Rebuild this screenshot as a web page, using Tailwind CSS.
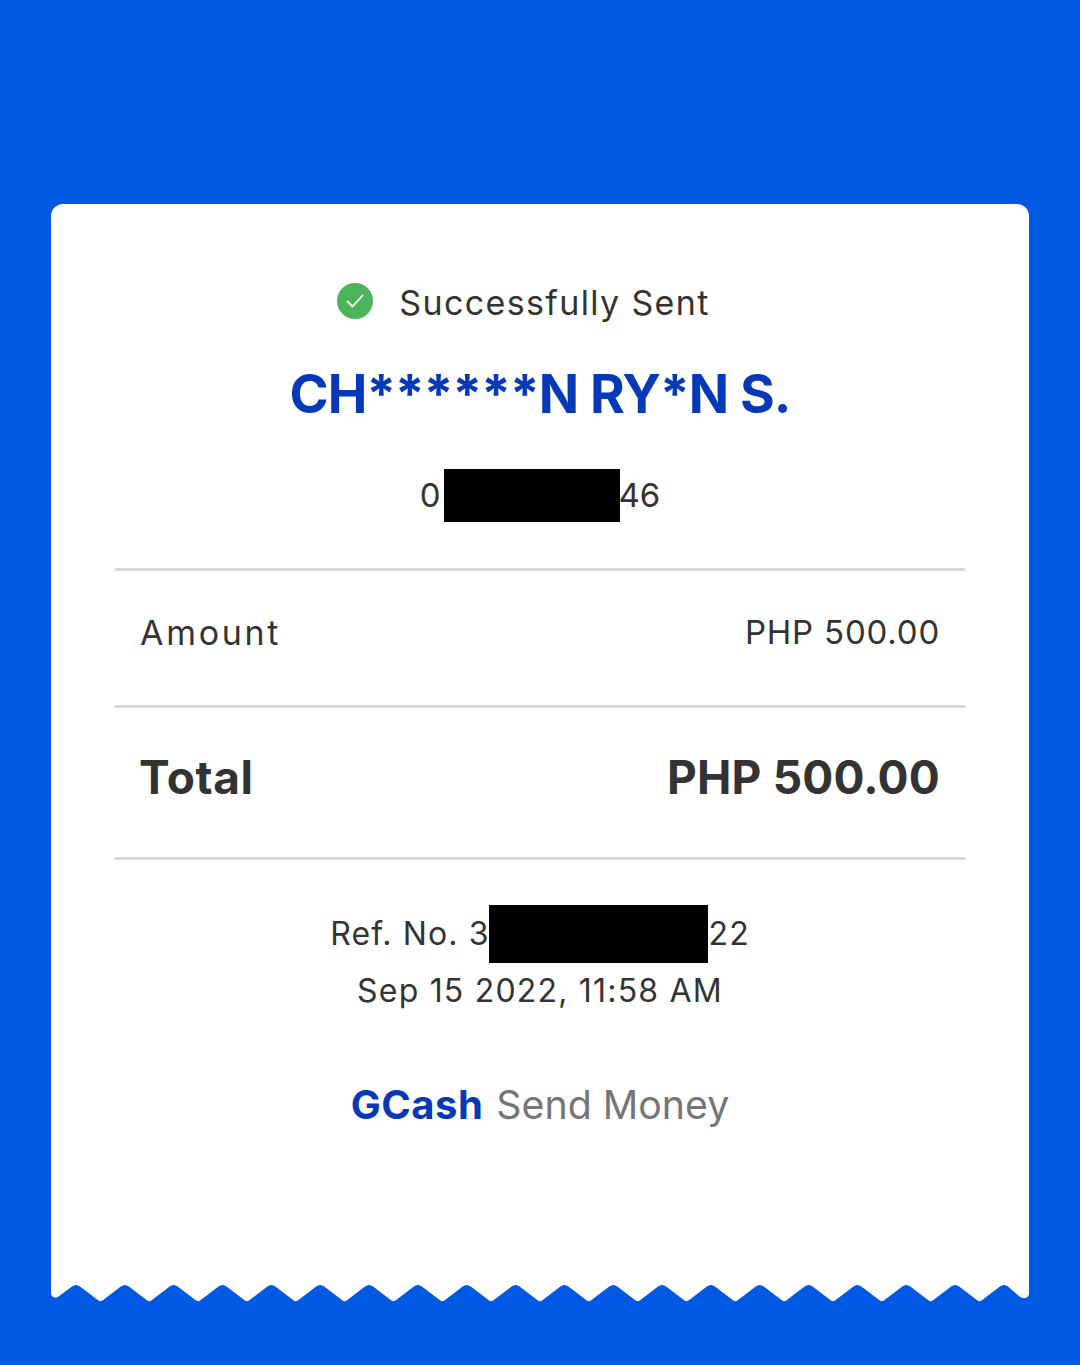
<!DOCTYPE html>
<html>
<head>
<meta charset="utf-8">
<script src="https://cdn.jsdelivr.net/npm/@tailwindcss/browser@4"></script>
</head>
<body class="m-0">
<div class="w-[1080px] h-[1365px] bg-[#0058e3] pt-[204px] px-[51px] overflow-hidden font-['Inter',sans-serif] text-[#333333]">
  <div class="w-[978px] h-[1081px] bg-white rounded-t-[12px] flex flex-col items-center pt-[78px]">
    <div class="h-[42px] flex items-center gap-[26px] pr-[33px]">
      <svg class="w-[36px] h-[36px] mb-[4px]" viewBox="0 0 36 36"><circle cx="18" cy="18" r="18" fill="#4cb45c"/><path d="M10.5 18.5l5 5 10-11" fill="none" stroke="#fff" stroke-width="1.8" stroke-linecap="round" stroke-linejoin="round"/></svg>
      <span class="text-[34px] leading-[42px] tracking-[1.35px]">Successfully Sent</span>
    </div>
    <div class="mt-[39px] h-[62px] text-[53px] leading-[62px] font-bold tracking-[-0.9px] text-[#0639b8]">CH******N RY*N S.</div>
    <div class="mt-[44px] h-[53px] text-[33px] leading-[53px]">
      <span>0<span class="inline-block ml-[3px] -mr-[1px] w-[176px] h-[53px] bg-black align-top"></span>46</span>
    </div>
    <div class="mt-[46px] w-[850px] border-t-[3px] border-[#d8d8d8] h-[137px] flex items-center justify-between px-[25px] pb-[10px]">
      <span class="text-[34px] tracking-[2.7px] mb-[2px]">Amount</span><span class="text-[33px] tracking-[0.8px]">PHP 500.00</span>
    </div>
    <div class="w-[850px] border-t-[3px] border-[#d8d8d8] h-[152px] flex items-center justify-between px-[25px] pb-[10px] text-[46px] font-bold">
      <span class="tracking-[0.6px] -ml-[1px]">Total</span><span class="tracking-[0.2px]">PHP 500.00</span>
    </div>
    <div class="w-[850px] border-t-[3px] border-[#d8d8d8] pt-[45px] flex flex-col items-center text-[32px] tracking-[1.1px]">
      <div class="h-[58px] leading-[58px]">Ref. No. 3<span class="inline-block -ml-[1px] mr-[1px] w-[219px] h-[58px] bg-black align-top"></span>22</div>
      <div class="h-[56px] leading-[56px] tracking-[1.2px]">Sep 15 2022, 11:58 AM</div>
    </div>
    <div class="mt-[56px] h-[60px] leading-[60px] flex gap-[13px]">
      <span class="text-[40px] tracking-[0.5px] font-bold text-[#0639b8]">GCash</span><span class="text-[39.3px] text-[#757575]">Send Money</span>
    </div>
  </div>
  <svg class="block w-[978px] h-[17px]" viewBox="0 0 978 17">
    <path fill="#fff" d="M0 0V8q0 4 4 4.5q2 .5 3.5 -1L21 1.5q4 -3 8 0l18.42 14
q2 1.5 4 0l18.42 -14q4 -3 8 0l18.42 14q2 1.5 4 0l18.42 -14q4 -3 8 0l18.42 14q2 1.5 4 0l18.42 -14q4 -3 8 0l18.42 14
q2 1.5 4 0l18.42 -14q4 -3 8 0l18.42 14q2 1.5 4 0l18.42 -14q4 -3 8 0l18.42 14q2 1.5 4 0l18.42 -14q4 -3 8 0l18.42 14
q2 1.5 4 0l18.42 -14q4 -3 8 0l18.42 14q2 1.5 4 0l18.42 -14q4 -3 8 0l18.42 14q2 1.5 4 0l18.42 -14q4 -3 8 0l18.42 14
q2 1.5 4 0l18.42 -14q4 -3 8 0l18.42 14q2 1.5 4 0l18.42 -14q4 -3 8 0l18.42 14q2 1.5 4 0l18.42 -14q4 -3 8 0l18.42 14
q2 1.5 4 0l18.42 -14q4 -3 8 0l18.42 14q2 1.5 4 0l18.42 -14q4 -3 8 0l18.42 14q2 1.5 4 0l18.42 -14q4 -3 8 0l18.42 14
q2 1.5 4 0l18.42 -14q4 -3 8 0l18.42 14q2 1.5 4 0l18.42 -14q4 -3 8 0l18.42 14q2 1.5 4 0l18.42 -14q4 -3 8 0l18.42 14
q2 1.5 4 0l18.42 -14q4 -3 8 0L969 12q3 1.5 5 1q4 -.5 4 -5V0Z"/>
  </svg>
</div>
</body>
</html>
